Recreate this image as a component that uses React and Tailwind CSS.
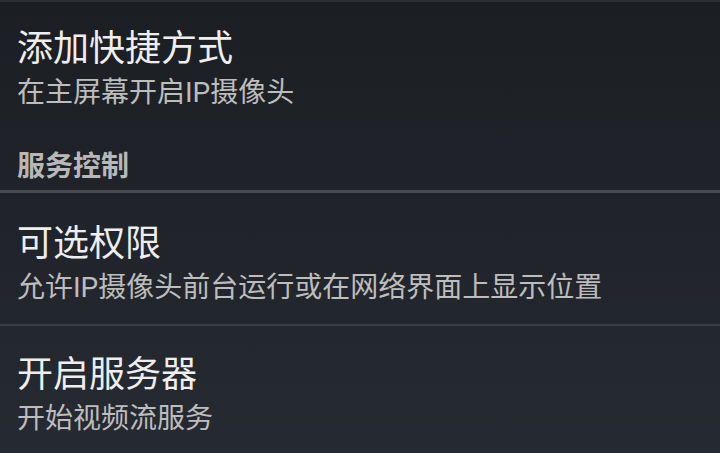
export default function App() {
  const font = { fontFamily: 'Roboto, "Noto Sans CJK SC", sans-serif' };
  return (
    <div
      className="w-[720px] h-[453px] overflow-hidden bg-gradient-to-b from-[#1b1e22] to-[#262a32] flex flex-col"
      style={font}
    >
      <div className="h-[2px] bg-[#2b2e33]" />
      {/* Item 1 */}
      <div className="pl-[17px] pt-[27px] flex flex-col">
        <div className="text-[36px] leading-[40px] text-[#eeeeee]">添加快捷方式</div>
        <div className="mt-[6px] text-[28px] leading-[36px] text-[#bdbdbd]">在主屏幕开启IP摄像头</div>
      </div>
      {/* Section header */}
      <div className="pl-[17px] pt-[38px] pb-[5px]">
        <div className="text-[28px] leading-[36px] font-bold text-[#b8b8b8]">服务控制</div>
      </div>
      <div className="h-[3px] bg-[#484b50]" />
      {/* Item 2 */}
      <div className="pl-[17px] pt-[31px] pb-[18px] flex flex-col">
        <div className="text-[36px] leading-[40px] text-[#eeeeee]">可选权限</div>
        <div className="mt-[6px] text-[28px] leading-[36px] text-[#bdbdbd]">允许IP摄像头前台运行或在网络界面上显示位置</div>
      </div>
      <div className="h-[2px] bg-[#3a3e45]" />
      {/* Item 3 */}
      <div className="pl-[17px] pt-[29px] flex flex-col">
        <div className="text-[36px] leading-[40px] text-[#eeeeee]">开启服务器</div>
        <div className="mt-[6px] text-[28px] leading-[36px] text-[#bdbdbd]">开始视频流服务</div>
      </div>
    </div>
  );
}
